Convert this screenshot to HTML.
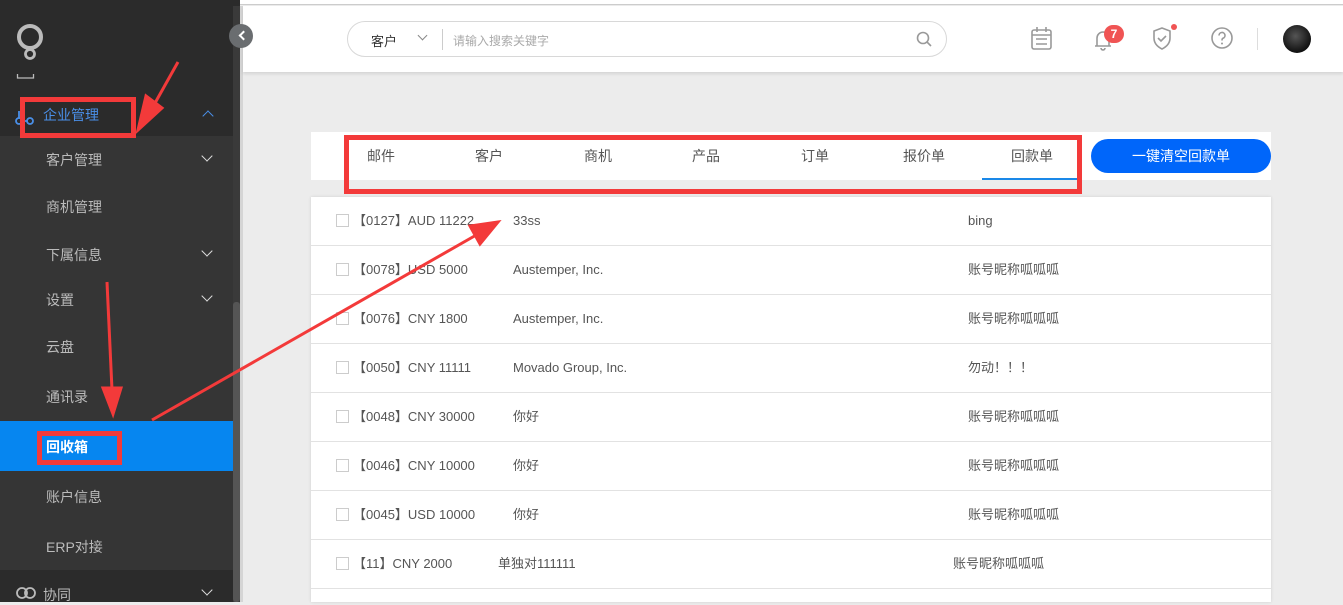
<!DOCTYPE html>
<html><head><meta charset="utf-8"><style>
*{margin:0;padding:0;box-sizing:border-box}
body{width:1343px;height:602px;overflow:hidden;background:#ececec;font-family:"Liberation Sans","Noto Sans CJK SC",sans-serif;position:relative;font-size:13px;color:#555}
.a{position:absolute}
.side{left:0;top:0;width:240px;height:602px;background:#2b2b2b}
.sub{left:0;top:136px;width:233px;height:434px;background:#353535}
.si{position:absolute;left:46px;color:#bbb;font-size:14px}
.chev{position:absolute;left:203px;width:8px;height:8px;border-right:1.6px solid #ddd;border-bottom:1.6px solid #ddd;transform:rotate(45deg)}
.row{position:absolute;left:311px;width:960px;height:49px;background:#fff;border-bottom:1px solid #e2e2e2}
.row span{position:absolute;top:0;line-height:48px;height:48px;font-size:13px;color:#555}
.cb{position:absolute;left:25px;top:17px;width:13px;height:13px;border:1px solid #ccc;background:#fff}
.tab{position:absolute;top:146px;font-size:14px;color:#555}
</style></head><body>
<div class="a" style="left:0;top:0;width:1343px;height:5px;background:#fff;border-bottom:1px solid #ccc"></div>
<div class="a side"></div>
<div class="a" style="left:0;top:570px;width:233px;height:32px;background:#2b2b2b"></div>
<div class="a sub"></div>
<div class="a" style="left:233px;top:6px;width:7px;height:596px;background:#3a3a3a"></div>
<div class="a" style="left:233px;top:302px;width:7px;height:300px;background:#555;border-radius:3px"></div>
<div class="a" style="left:240px;top:6px;width:3px;height:596px;background:#d5d5d5"></div>
<!-- logo -->
<svg class="a" style="left:0;top:0" width="60" height="90"><circle cx="30" cy="37" r="11" fill="none" stroke="#bbb" stroke-width="4"/><circle cx="30" cy="54" r="4.5" fill="none" stroke="#bbb" stroke-width="2.8"/><path d="M17.5 74v4h16v-4" fill="none" stroke="#bbb" stroke-width="1.3"/></svg>
<svg class="a" style="left:15px;top:108px" width="20" height="18"><circle cx="4" cy="13" r="3" fill="none" stroke="#4a8fe8" stroke-width="1.8"/><circle cx="15" cy="13" r="3" fill="none" stroke="#4a8fe8" stroke-width="1.8"/><path d="M4 10V3M7 13h5" stroke="#4a8fe8" stroke-width="1.8"/></svg>
<div class="a" style="left:43px;top:105px;color:#4a8fe8;font-size:14px">企业管理</div>
<div class="a" style="left:204px;top:112px;width:8px;height:8px;border-left:1.6px solid #4a8fe8;border-top:1.6px solid #4a8fe8;transform:rotate(45deg)"></div>
<div class="si" style="top:150px">客户管理</div><div class="chev" style="top:152px"></div>
<div class="si" style="top:197px">商机管理</div>
<div class="si" style="top:245px">下属信息</div><div class="chev" style="top:247px"></div>
<div class="si" style="top:290px">设置</div><div class="chev" style="top:292px"></div>
<div class="si" style="top:337px">云盘</div>
<div class="si" style="top:387px">通讯录</div>
<div class="a" style="left:0;top:421px;width:233px;height:50px;background:#0686f0"></div>
<div class="si" style="top:437px;color:#fff;font-weight:bold">回收箱</div>
<div class="si" style="top:487px">账户信息</div>
<div class="si" style="top:537px">ERP对接</div>
<svg class="a" style="left:16px;top:586px" width="20" height="14"><circle cx="6" cy="7" r="5" fill="none" stroke="#bbb" stroke-width="1.8"/><circle cx="14" cy="7" r="5" fill="none" stroke="#bbb" stroke-width="1.8"/></svg>
<div class="si" style="top:585px;left:43px">协同</div><div class="chev" style="top:586px"></div>
<!-- header -->
<div class="a" style="left:243px;top:6px;width:1100px;height:66px;background:#fff;box-shadow:0 2px 3px rgba(0,0,0,.1)"></div>
<div class="a" style="left:229px;top:24px;width:24px;height:24px;border-radius:50%;background:#6a6d70"></div>
<div class="a" style="left:240px;top:32px;width:7px;height:7px;border-left:2px solid #fff;border-bottom:2px solid #fff;transform:rotate(45deg)"></div>
<div class="a" style="left:347px;top:21px;width:600px;height:36px;border:1px solid #d8d8d8;border-radius:18px;background:#fff"></div>
<div class="a" style="left:371px;top:31px;font-size:13px;color:#333">客户</div>
<div class="a" style="left:419px;top:32px;width:7px;height:7px;border-right:1.2px solid #888;border-bottom:1.2px solid #888;transform:rotate(45deg)"></div>
<div class="a" style="left:442px;top:29px;width:1px;height:21px;background:#ccc"></div>
<div class="a" style="left:453px;top:32px;font-size:12px;color:#aaa">请输入搜索关键字</div>
<svg class="a" style="left:915px;top:30px" width="18" height="18"><circle cx="8" cy="8" r="5.5" fill="none" stroke="#999" stroke-width="1.6"/><path d="M12 12l4 4" stroke="#999" stroke-width="1.6"/></svg>
<svg class="a" style="left:1030px;top:26px" width="24" height="26"><rect x="2" y="4" width="19" height="19" rx="2" fill="none" stroke="#999" stroke-width="1.6"/><path d="M7 1v5M16 1v5M2 9h19M6 13h11M6 18h11" stroke="#999" stroke-width="1.6"/></svg>
<svg class="a" style="left:1091px;top:26px" width="24" height="26"><path d="M4 20h16M6 20v-8a6 6 0 0 1 12 0v8M10 22a2 2 0 0 0 4 0" fill="none" stroke="#999" stroke-width="1.6"/></svg>
<div class="a" style="left:1104px;top:25px;width:20px;height:18px;border-radius:9px;background:#f05454;color:#fff;font-size:12px;font-weight:bold;text-align:center;line-height:18px">7</div>
<svg class="a" style="left:1151px;top:26px" width="24" height="26"><path d="M11 2l8 3v7c0 6-4 9-8 11-4-2-8-5-8-11V5z" fill="none" stroke="#999" stroke-width="1.6"/><path d="M7 12l3 3 5-5" fill="none" stroke="#999" stroke-width="1.6"/></svg>
<div class="a" style="left:1171px;top:24px;width:6px;height:6px;border-radius:50%;background:#f05454"></div>
<svg class="a" style="left:1210px;top:26px" width="26" height="26"><circle cx="12" cy="12" r="10" fill="none" stroke="#999" stroke-width="1.6"/><path d="M9 9.5a3 3 0 1 1 4 2.8c-1 .4-1 1-1 2.2" fill="none" stroke="#999" stroke-width="1.6"/><circle cx="12" cy="17.5" r="1" fill="#999"/></svg>
<div class="a" style="left:1257px;top:28px;width:1px;height:22px;background:#ddd"></div>
<div class="a" style="left:1283px;top:25px;width:28px;height:28px;border-radius:50%;background:radial-gradient(circle at 45% 40%,#555,#111 70%)"></div>
<!-- tabs -->
<div class="a" style="left:311px;top:132px;width:960px;height:48px;background:#fff"></div>
<div class="tab" style="left:367px">邮件</div>
<div class="tab" style="left:475px">客户</div>
<div class="tab" style="left:584px">商机</div>
<div class="tab" style="left:692px">产品</div>
<div class="tab" style="left:801px">订单</div>
<div class="tab" style="left:903px">报价单</div>
<div class="tab" style="left:1011px">回款单</div>
<div class="a" style="left:982px;top:178px;width:96px;height:2px;background:#1a88e8"></div>
<div class="a" style="left:1091px;top:139px;width:180px;height:34px;border-radius:17px;background:#0066fa;color:#fff;font-size:14px;text-align:center;line-height:34px">一键清空回款单</div>
<!-- rows -->
<div class="a" style="left:311px;top:197px;width:960px;height:405px;background:#fff;box-shadow:0 0 3px rgba(0,0,0,.12)"></div>
<div class="row" style="top:197px"><i class="cb"></i><span style="left:42px">【0127】AUD 11222</span><span style="left:202px">33ss</span><span style="left:657px">bing</span></div>
<div class="row" style="top:246px"><i class="cb"></i><span style="left:42px">【0078】USD 5000</span><span style="left:202px">Austemper, Inc.</span><span style="left:657px">账号昵称呱呱呱</span></div>
<div class="row" style="top:295px"><i class="cb"></i><span style="left:42px">【0076】CNY 1800</span><span style="left:202px">Austemper, Inc.</span><span style="left:657px">账号昵称呱呱呱</span></div>
<div class="row" style="top:344px"><i class="cb"></i><span style="left:42px">【0050】CNY 11111</span><span style="left:202px">Movado Group, Inc.</span><span style="left:657px">勿动！！！</span></div>
<div class="row" style="top:393px"><i class="cb"></i><span style="left:42px">【0048】CNY 30000</span><span style="left:202px">你好</span><span style="left:657px">账号昵称呱呱呱</span></div>
<div class="row" style="top:442px"><i class="cb"></i><span style="left:42px">【0046】CNY 10000</span><span style="left:202px">你好</span><span style="left:657px">账号昵称呱呱呱</span></div>
<div class="row" style="top:491px"><i class="cb"></i><span style="left:42px">【0045】USD 10000</span><span style="left:202px">你好</span><span style="left:657px">账号昵称呱呱呱</span></div>
<div class="row" style="top:540px"><i class="cb"></i><span style="left:42px">【11】CNY 2000</span><span style="left:187px">单独对111111</span><span style="left:642px">账号昵称呱呱呱</span></div>
<!-- annotations -->
<svg class="a" style="left:0;top:0" width="1343" height="602">
<g fill="none" stroke="#f33a3a" stroke-width="5">
<rect x="22.5" y="99.5" width="111" height="36"/>
<rect x="346.5" y="137.5" width="733" height="54"/>
<rect x="39.5" y="433.5" width="80" height="29"/>
</g>
<g stroke="#f33a3a" stroke-width="3" fill="#f33a3a">
<path d="M178 62L150 112"/><path d="M138 130L146 96L162 108Z"/>
<path d="M107 282L112 390"/><path d="M113 414L103 388L121 388Z"/>
<path d="M152 420L478 234" stroke-width="3"/><path d="M498 222L470 226L480 244Z"/>
</g>
</svg>
</body></html>
